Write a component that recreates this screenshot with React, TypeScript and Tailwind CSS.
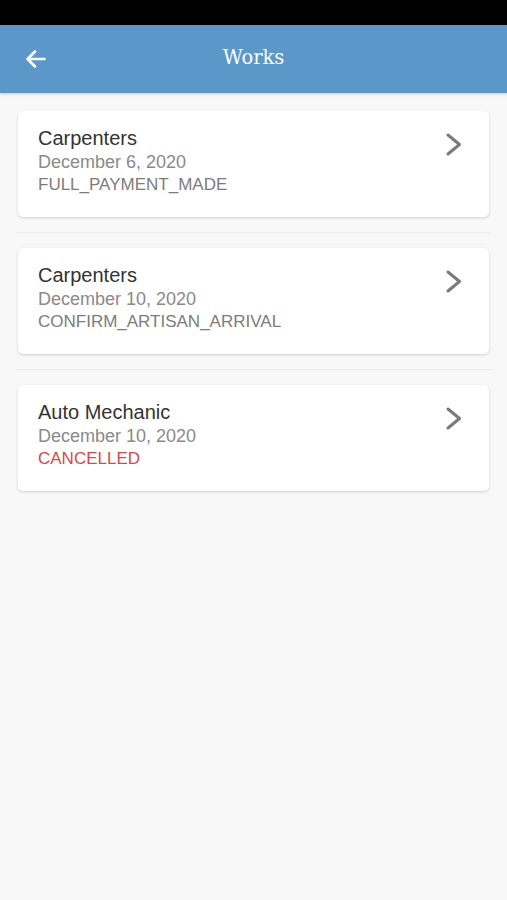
import React from "react";

type Work = { title: string; date: string; status: string; cancelled?: boolean };

const works: Work[] = [
  { title: "Carpenters", date: "December 6, 2020", status: "FULL_PAYMENT_MADE" },
  { title: "Carpenters", date: "December 10, 2020", status: "CONFIRM_ARTISAN_ARRIVAL" },
  { title: "Auto Mechanic", date: "December 10, 2020", status: "CANCELLED", cancelled: true },
];

function Card({ w }: { w: Work }) {
  return (
    <div className="mx-[18px] flex rounded-[5px] bg-white pl-5 pr-[27px] pt-[15px] pb-[22px] shadow-[0_1px_3px_rgba(0,0,0,0.16)]">
      <div className="flex flex-1 flex-col">
        <div className="text-[20px] leading-[24px] text-[#333333]">{w.title}</div>
        <div className="text-[18px] leading-[24px] text-[#8a8a8a]">{w.date}</div>
        <div
          className={
            "text-[17px] leading-[21px] " + (w.cancelled ? "text-[#e2453f]" : "text-[#7c7c7c]")
          }
        >
          {w.status}
        </div>
      </div>
      <svg width="17" height="23" viewBox="0 0 17 23" className="mt-[7px]">
        <path d="M3 2 L14.5 11.5 L3 21" fill="none" stroke="#7a7a7a" strokeWidth="3" strokeLinecap="round" strokeLinejoin="round" />
      </svg>
    </div>
  );
}

export default function App() {
  return (
    <div
      className="min-h-[900px] w-full bg-[#f8f8f8]"
      style={{ fontFamily: '"Liberation Sans", Arial, sans-serif' }}
    >
      <div className="h-[25px] bg-black" />
      <div className="relative flex h-[68px] items-center bg-[#5b97c8] shadow-[0_1px_3px_rgba(0,0,0,0.2)]">
        <div className="flex w-[70px] items-center pl-[25px]">
          <svg width="21" height="18" viewBox="0 0 21 18">
            <path d="M19.5 9H2.5 M10 1.5 L2.5 9 L10 16.5" fill="none" stroke="#ffffff" strokeWidth="2.6" strokeLinecap="round" strokeLinejoin="round" />
          </svg>
        </div>
        <div
          className="flex-1 pb-[2px] text-center text-[19.5px] text-white"
          style={{ fontFamily: '"DejaVu Serif", "Liberation Serif", serif' }}
        >
          Works
        </div>
        <div className="w-[70px]" />
      </div>
      <div className="pt-[18px]">
        {works.map((w, i) => (
          <div key={i}>
            <Card w={w} />
            {i < works.length - 1 && (
              <div className="py-[15px]">
                <div className="mx-[16px] h-px bg-[#ececec]" />
              </div>
            )}
          </div>
        ))}
      </div>
    </div>
  );
}
